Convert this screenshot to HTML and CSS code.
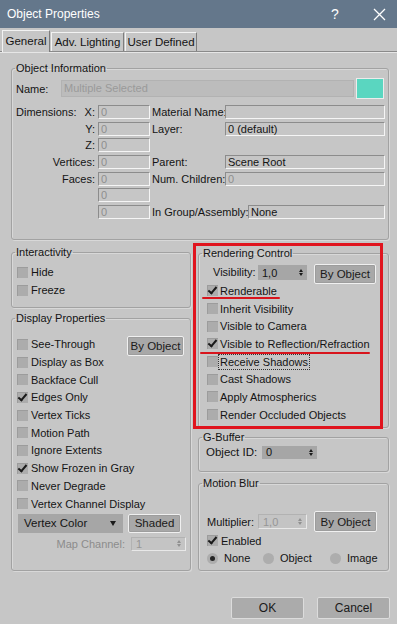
FILE: index.html
```html
<!DOCTYPE html>
<html lang="en">
<head>
  <meta charset="UTF-8">
  <title>Object Properties</title>
  <link rel="stylesheet" href="styles.css">
</head>
<body>

  <div class="titlebar">
    <span class="title">Object Properties</span>
    <span class="help">?</span>
    <svg class="close" width="13" height="13" viewBox="0 0 13 13">
      <path d="M1 1 L12 12 M12 1 L1 12" stroke="#fff" stroke-width="1.3" fill="none"/>
    </svg>
  </div>

  <div class="tabs">
    <div class="tab active" style="width:48px">General</div>
    <div class="tab" style="width:73px">Adv. Lighting</div>
    <div class="tab" style="width:72px">User Defined</div>
  </div>

  <div class="page">

    <!-- Object information -->
    <fieldset class="group info">
      <legend>Object Information</legend>
      <div class="name-row">
        <span class="name-lbl">Name:</span>
        <span class="name-field">Multiple Selected</span>
        <span class="swatch"></span>
      </div>
      <div class="info-rows">
        <div class="info-row">
          <span class="lbl-a"><span>Dimensions:</span><span>X:</span></span>
          <span class="field small dim">0</span>
          <span class="lbl-c">Material Name:</span>
          <span class="field wide"></span>
        </div>
        <div class="info-row">
          <span class="lbl-a"><span></span><span>Y:</span></span>
          <span class="field small dim">0</span>
          <span class="lbl-c">Layer:</span>
          <span class="field wide">0 (default)</span>
        </div>
        <div class="info-row">
          <span class="lbl-a"><span></span><span>Z:</span></span>
          <span class="field small dim">0</span>
        </div>
        <div class="info-row">
          <span class="lbl-a"><span></span><span>Vertices:</span></span>
          <span class="field small dim">0</span>
          <span class="lbl-c">Parent:</span>
          <span class="field wide">Scene Root</span>
        </div>
        <div class="info-row">
          <span class="lbl-a"><span></span><span>Faces:</span></span>
          <span class="field small dim">0</span>
          <span class="lbl-c">Num. Children:</span>
          <span class="field wide dim">0</span>
        </div>
        <div class="info-row">
          <span class="lbl-a"></span>
          <span class="field small dim">0</span>
        </div>
        <div class="info-row">
          <span class="lbl-a"></span>
          <span class="field small dim">0</span>
          <span class="lbl-c long">In Group/Assembly:</span>
          <span class="field group-field">None</span>
        </div>
      </div>
    </fieldset>

    <div class="cols">
      <div class="col left">

        <fieldset class="group interact">
          <legend>Interactivity</legend>
          <div class="rows">
            <div class="chk"><span class="box"></span>Hide</div>
            <div class="chk"><span class="box"></span>Freeze</div>
          </div>
        </fieldset>

        <fieldset class="group display">
          <legend>Display Properties</legend>
          <div class="rows">
            <div class="chk split">
              <span class="chk-in"><span class="box"></span>See-Through</span>
              <span class="btn by-obj">By Object</span>
            </div>
            <div class="chk"><span class="box"></span>Display as Box</div>
            <div class="chk"><span class="box"></span>Backface Cull</div>
            <div class="chk"><span class="box on"></span>Edges Only</div>
            <div class="chk"><span class="box"></span>Vertex Ticks</div>
            <div class="chk"><span class="box"></span>Motion Path</div>
            <div class="chk"><span class="box"></span>Ignore Extents</div>
            <div class="chk"><span class="box on"></span>Show Frozen in Gray</div>
            <div class="chk"><span class="box"></span>Never Degrade</div>
            <div class="chk"><span class="box"></span>Vertex Channel Display</div>
          </div>
          <div class="dd-row">
            <span class="dropdown">Vertex Color<span class="dd-arrow"></span></span>
            <span class="btn shaded">Shaded</span>
          </div>
          <div class="map-row">
            <span class="muted">Map Channel:</span>
            <span class="spin off map-spin"><span>1</span><span class="arrows"></span></span>
          </div>
        </fieldset>

      </div>

      <div class="col right">

        <fieldset class="group render">
          <legend>Rendering Control</legend>
          <div class="vis-row">
            <span class="vis-lbl">Visibility:</span>
            <span class="spin vis-spin"><span>1,0</span><span class="arrows"></span></span>
            <span class="btn vis-btn">By Object</span>
          </div>
          <div class="rows">
            <div class="chk"><span class="box on"></span>Renderable</div>
            <div class="chk"><span class="box"></span>Inherit Visibility</div>
            <div class="chk"><span class="box"></span>Visible to Camera</div>
            <div class="chk"><span class="box on"></span>Visible to Reflection/Refraction</div>
            <div class="chk"><span class="box"></span><span class="focus">Receive Shadows</span></div>
            <div class="chk"><span class="box"></span>Cast Shadows</div>
            <div class="chk"><span class="box"></span>Apply Atmospherics</div>
            <div class="chk"><span class="box"></span>Render Occluded Objects</div>
          </div>
          <!-- annotation marks -->
          <div class="mark-box"></div>
          <div class="mark-line line-1"></div>
          <div class="mark-line line-2"></div>
        </fieldset>

        <fieldset class="group gbuf">
          <legend>G-Buffer</legend>
          <div class="id-row">
            <span class="id-lbl">Object ID:</span>
            <span class="spin id-spin"><span>0</span><span class="arrows"></span></span>
          </div>
        </fieldset>

        <fieldset class="group mblur">
          <legend>Motion Blur</legend>
          <div class="mult-row">
            <span class="mult-lbl">Multiplier:</span>
            <span class="spin off mult-spin"><span>1,0</span><span class="arrows"></span></span>
            <span class="btn mult-btn">By Object</span>
          </div>
          <div class="chk enabled"><span class="box on"></span>Enabled</div>
          <div class="radio-row">
            <span class="radio-item r-none"><span class="radio on"></span>None</span>
            <span class="radio-item r-obj"><span class="radio"></span>Object</span>
            <span class="radio-item"><span class="radio"></span>Image</span>
          </div>
        </fieldset>

      </div>
    </div>

    <div class="footer">
      <span class="btn big">OK</span>
      <span class="btn big">Cancel</span>
    </div>

  </div>

</body>
</html>
```

FILE: styles.css
```css
body {
  margin: 0;
  width: 397px;
  height: 624px;
  overflow: hidden;
  background-color: #c6c6c6;
  font-family: "Liberation Sans", Arial, sans-serif;
  font-size: 11px;
  color: #141414;
}

/* title bar */
.titlebar {
  height: 28px;
  background-color: #64778b;
  color: #fff;
  display: flex;
  align-items: center;
  padding-left: 7px;
}

.title {
  font-size: 12px;
}

.help {
  margin-left: auto;
  font-size: 14px;
  width: 8px;
}

.close {
  margin-left: 34px;
  margin-right: 11px;
}

/* tabs */
.tabs {
  height: 24px;
  display: flex;
  align-items: flex-end;
  padding-left: 2px;
  border-bottom: 1px solid #8a8a8a;
  box-shadow: 0 1px 0 #e6e6e6;
  box-sizing: border-box;
}

.tab {
  height: 19px;
  box-sizing: border-box;
  border-top: 1px solid #f2f2f2;
  border-left: 1px solid #f2f2f2;
  border-right: 1px solid #7d7d7d;
  background-color: #c6c6c6;
  text-align: center;
  line-height: 18px;
  font-size: 11.5px;
  margin-right: 1px;
}

.tab.active {
  height: 22px;
  margin-bottom: -1px;
  line-height: 20px;
  position: relative;
}

.page {
  padding: 0 8px 0 11px;
}

/* group boxes */
.group {
  margin: 0;
  padding: 0 2px 0 3px;
  min-width: 0;
  box-sizing: border-box;
  border: 1px solid #a2a2a2;
  border-radius: 3px;
  box-shadow: inset 1px 1px 0 #d8d8d8, 1px 1px 0 #d8d8d8;
}

.group legend {
  padding: 0 1px;
  line-height: 14px;
  font-size: 11px;
}

.info {
  margin-top: 9px;
  height: 179px;
}

.name-row {
  display: flex;
  align-items: center;
  height: 21px;
  margin-top: 3px;
  padding-left: 1px;
}

.name-lbl {
  width: 45px;
}

.name-field {
  width: 293px;
  height: 17px;
  box-sizing: border-box;
  background-color: #bcbcbc;
  border: 1px solid #b2b2b2;
  color: #9a9a9a;
  padding-left: 2px;
  line-height: 15px;
}

.swatch {
  width: 28px;
  height: 21px;
  box-sizing: border-box;
  margin-left: 2px;
  background-color: #5ad6c0;
  border: 1px solid #ececec;
}

.info-rows {
  margin-top: 6px;
  display: flex;
  flex-direction: column;
  gap: 2.67px;
  padding-left: 1px;
}

.info-row {
  display: flex;
  height: 14px;
  align-items: center;
  white-space: nowrap;
}

.lbl-a {
  flex: none;
  width: 82px;
  box-sizing: border-box;
  padding-right: 3px;
  display: flex;
  justify-content: space-between;
}

.lbl-c {
  flex: none;
  width: 75px;
  box-sizing: border-box;
  padding-left: 2px;
}

.lbl-c.long {
  width: 98px;
}

.field {
  flex: none;
  height: 14px;
  box-sizing: border-box;
  border-top: 1px solid #8c8c8c;
  border-left: 1px solid #8c8c8c;
  border-bottom: 1px solid #f5f5f5;
  border-right: 1px solid #f5f5f5;
  padding-left: 2px;
  line-height: 12px;
  white-space: nowrap;
}

.field.small { width: 52px; }
.field.wide { width: 160px; }
.field.group-field { width: 137px; }
.dim { color: #8e8e8e; }

.cols {
  display: flex;
  gap: 7px;
  margin-top: 5px;
}

.col.left { width: 180px; }
.col.right { width: 191px; }

.interact {
  height: 63px;
}

.interact .rows {
  margin-top: 4.5px;
  padding-left: 2px;
}

.display {
  height: 260px;
  margin-top: 3px;
}

.display .rows {
  margin-top: 10.5px;
  padding-left: 2px;
}

/* checkboxes */
.chk {
  display: flex;
  align-items: center;
  height: 17.7px;
  white-space: nowrap;
}

.chk-in {
  display: flex;
  align-items: center;
}

.chk.split {
  justify-content: space-between;
  padding-right: 4px;
}

.box {
  flex: none;
  width: 11px;
  height: 11px;
  margin-right: 3px;
  background-color: #acacac;
  box-shadow: inset 1px 1px 0 #9c9c9c;
  position: relative;
}

.box.on::after {
  content: "";
  position: absolute;
  left: 3px;
  top: 0;
  width: 3px;
  height: 7px;
  border: solid #1a1a1a;
  border-width: 0 2px 2px 0;
  transform: rotate(40deg);
}

.focus {
  outline: 1px dotted #333;
  outline-offset: 1px;
}

/* buttons */
.btn {
  display: flex;
  align-items: center;
  justify-content: center;
  box-sizing: border-box;
  background-color: #a8a8a8;
  border: 1px solid #f0f0f0;
  border-radius: 2px;
  box-shadow: inset 0 0 0 1px #9d9d9d;
  color: #1a1a1a;
  font-size: 11.5px;
}

.by-obj {
  width: 57px;
  height: 20px;
  margin-top: 3px;
}

.dd-row {
  display: flex;
  gap: 5px;
  height: 19px;
  margin-top: 1.5px;
  padding-left: 3px;
}

.dropdown {
  width: 105px;
  background-color: #a6a6a6;
  display: flex;
  align-items: center;
  padding-left: 6px;
  box-sizing: border-box;
  font-size: 11.5px;
}

.dd-arrow {
  margin-left: auto;
  margin-right: 7px;
  border-left: 3.5px solid transparent;
  border-right: 3.5px solid transparent;
  border-top: 5px solid #1a1a1a;
}

.shaded {
  width: 53px;
}

.map-row {
  display: flex;
  justify-content: flex-end;
  align-items: center;
  gap: 6px;
  height: 14px;
  margin-top: 4px;
  padding-right: 2px;
}

.muted { color: #8c8c8c; }

/* spinners */
.spin {
  display: flex;
  align-items: center;
  box-sizing: border-box;
  height: 15px;
  background-color: #a6a6a6;
  padding-left: 4px;
  padding-right: 4px;
}

.spin.off {
  background-color: #c4c4c4;
  border-top: 1px solid #b2b2b2;
  border-left: 1px solid #b2b2b2;
  border-bottom: 1px solid #e8e8e8;
  border-right: 1px solid #e8e8e8;
  color: #969696;
}

.arrows {
  margin-left: auto;
  display: flex;
  flex-direction: column;
  gap: 1px;
}

.arrows::before,
.arrows::after {
  content: "";
  border-left: 2.5px solid transparent;
  border-right: 2.5px solid transparent;
}

.arrows::before { border-bottom: 3px solid #1a1a1a; }
.arrows::after { border-top: 3px solid #1a1a1a; }
.spin.off .arrows::before { border-bottom-color: #909090; }
.spin.off .arrows::after { border-top-color: #909090; }

.map-spin { width: 55px; height: 14px; }

/* rendering control */
.render {
  position: relative;
  height: 182px;
  margin-top: 1px;
}

.vis-row {
  display: flex;
  height: 18px;
  margin-top: 4px;
  padding-left: 11px;
}

.vis-lbl {
  width: 45px;
  line-height: 16px;
}

.vis-spin {
  width: 49px;
  margin-top: 1px;
}

.vis-btn {
  width: 62px;
  height: 20px;
  margin-left: 7px;
}

.render .rows {
  padding-left: 5px;
}

.render .box {
  margin-right: 2px;
}

/* positions are relative to the content box below the legend */
.mark-box {
  position: absolute;
  left: -6px;
  top: -17px;
  width: 190px;
  height: 186px;
  box-sizing: border-box;
  border: 3px solid #e0141e;
}

.mark-line {
  position: absolute;
  height: 2px;
  background-color: #d8141c;
  border-radius: 1px;
}

.line-1 { left: 3px; top: 37px; width: 78px; }
.line-2 { left: 1px; top: 92px; width: 170px; }

/* g-buffer */
.gbuf {
  height: 42px;
  margin-top: 2px;
}

.id-row {
  display: flex;
  align-items: center;
  height: 14px;
  margin-top: 1px;
  padding-left: 4px;
}

.id-lbl { width: 56px; font-size: 11.5px; }
.id-spin { width: 55px; height: 13px; }

/* motion blur */
.mblur {
  height: 95px;
  margin-top: 4px;
}

.mult-row {
  display: flex;
  align-items: center;
  height: 21px;
  margin-top: 21px;
  padding-left: 5px;
}

.mult-lbl { width: 51px; }
.mult-spin { width: 49px; }

.mult-btn {
  width: 63px;
  height: 21px;
  margin-left: 7px;
}

.enabled {
  padding-left: 5px;
  height: 17px;
}

.radio-row {
  display: flex;
  align-items: center;
  height: 18px;
  padding-left: 5px;
}

.radio-item {
  display: flex;
  align-items: center;
}

.r-none { width: 56px; }
.r-obj { width: 67px; }

.radio {
  width: 11px;
  height: 11px;
  border-radius: 50%;
  background-color: #adadad;
  margin-right: 6px;
  position: relative;
}

.radio.on::after {
  content: "";
  position: absolute;
  left: 3px;
  top: 3px;
  width: 5px;
  height: 5px;
  border-radius: 50%;
  background-color: #262626;
}

/* footer */
.footer {
  display: flex;
  justify-content: flex-end;
  gap: 13px;
  margin-top: 26px;
  margin-right: -1px;
}

.btn.big {
  width: 73px;
  height: 22px;
  background-color: #ababab;
  border-color: #dcdcdc;
  box-shadow: none;
  font-size: 12px;
}
```
